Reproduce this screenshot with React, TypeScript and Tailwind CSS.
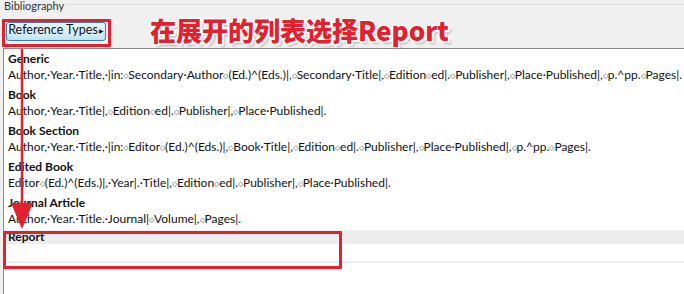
import React from "react"

const entries = [
  {
    title: "Generic",
    text: "Author,·Year.·Title,·|in:◦Secondary·Author◦(Ed.)^(Eds.)|,◦Secondary·Title|,◦Edition◦ed|.◦Publisher|,◦Place·Published|,◦p.^pp.◦Pages|.",
  },
  { title: "Book", text: "Author,·Year.·Title|,◦Edition◦ed|.◦Publisher|,◦Place·Published|." },
  {
    title: "Book Section",
    text: "Author,·Year.·Title,·|in:◦Editor◦(Ed.)^(Eds.)|,◦Book·Title|,◦Edition◦ed|.◦Publisher|,◦Place·Published|,◦p.^pp.◦Pages|.",
  },
  { title: "Edited Book", text: "Editor◦(Ed.)^(Eds.)|,·Year|.·Title|,◦Edition◦ed|.◦Publisher|,◦Place·Published|." },
  { title: "Journal Article", text: "Author,·Year.·Title.·Journal|◦Volume|,◦Pages|." },
]

// Word-style marks: "◦" = non-breaking space, drawn small
function Marked({ text }: { text: string }) {
  const parts = text.split("◦")
  return (
    <>
      {parts.map((p, i) => (
        <React.Fragment key={i}>
          {i > 0 && <span className="inline-block w-[5px] text-center text-[7px] align-[1px] text-[#444]">◇</span>}
          {p}
        </React.Fragment>
      ))}
    </>
  )
}

export default function App() {
  return (
    <div
      className="relative w-[684px] h-[294px] overflow-hidden bg-[#f0f0f0] flex flex-col text-[#111]"
      style={{ fontFamily: 'Lato, "Open Sans", sans-serif' }}
    >
      {/* group header */}
      <div className="h-[12px] flex items-center pl-[4px]">
        <span className="text-[11px] leading-[12px] text-[#333]">Bibliography</span>
        <div className="flex-1 ml-[3px] h-px bg-[#dcdcdc] -mt-[4px]" />
      </div>

      {/* toolbar row */}
      <div className="h-[36px] flex items-center pl-[6px] pt-[2px]">
        <button className="h-[19px] w-[100px] rounded-[3px] border border-[#3c7fb1] bg-gradient-to-b from-[#eaf6fd] via-[#d9f0fc] to-[#bde3f7] flex items-center justify-center text-[12.5px] leading-none text-[#111] pb-[1px]">
          Reference Types
          <span className="text-[6px] ml-[1px]">▶</span>
        </button>
        <div
          className="ml-[44px] text-[26px] font-black leading-none text-[#e3202e] -mt-[2px]"
          style={{
            fontFamily: '"Noto Sans CJK SC", "Noto Sans", sans-serif',
            textShadow:
              "1px 1px 0 #fff, -1px -1px 0 #fff, 1px -1px 0 #fff, -1px 1px 0 #fff, 2px 2px 0 #fff, 0 2px 0 #fff, 2px 0 0 #fff, 3px 3px 2px rgba(0,0,0,0.25)",
          }}
        >
          在展开的列表选择Report
        </div>
      </div>

      {/* list */}
      <div className="flex-1 ml-[3px] border-l border-t border-[#8a8a8a] bg-white pt-[1px]">
        {entries.map((e) => (
          <div key={e.title} className="pl-[4px] mb-[3px]">
            <div className="h-[17px] leading-[17px] text-[12px] font-bold">{e.title}</div>
            <div className="h-[16px] leading-[16px] text-[12px] whitespace-nowrap">
              <Marked text={e.text} />
            </div>
          </div>
        ))}
        <div className="mt-[2px] h-[14px] bg-[#ededed] pl-[4px] leading-[14px] text-[12px] font-bold">Report</div>
        <div className="h-[17px]" />
        <div className="h-[2px] bg-[#ededed]" />
      </div>

      {/* annotations */}
      <div className="absolute left-[2px] top-[19px] w-[109px] h-[28px] border-[3px] border-[#e3202e] rounded-[1px]" />
      <div className="absolute left-[3px] top-[231px] w-[339px] h-[38px] border-[3px] border-[#e3202e] rounded-[1px]" />
      <svg className="absolute left-0 top-0" width="684" height="294">
        <line x1="22" y1="49" x2="22" y2="206" stroke="#e3202e" strokeWidth="2.5" />
        <polygon points="11,203 33,203 22,229" fill="#e3202e" />
      </svg>
    </div>
  )
}
